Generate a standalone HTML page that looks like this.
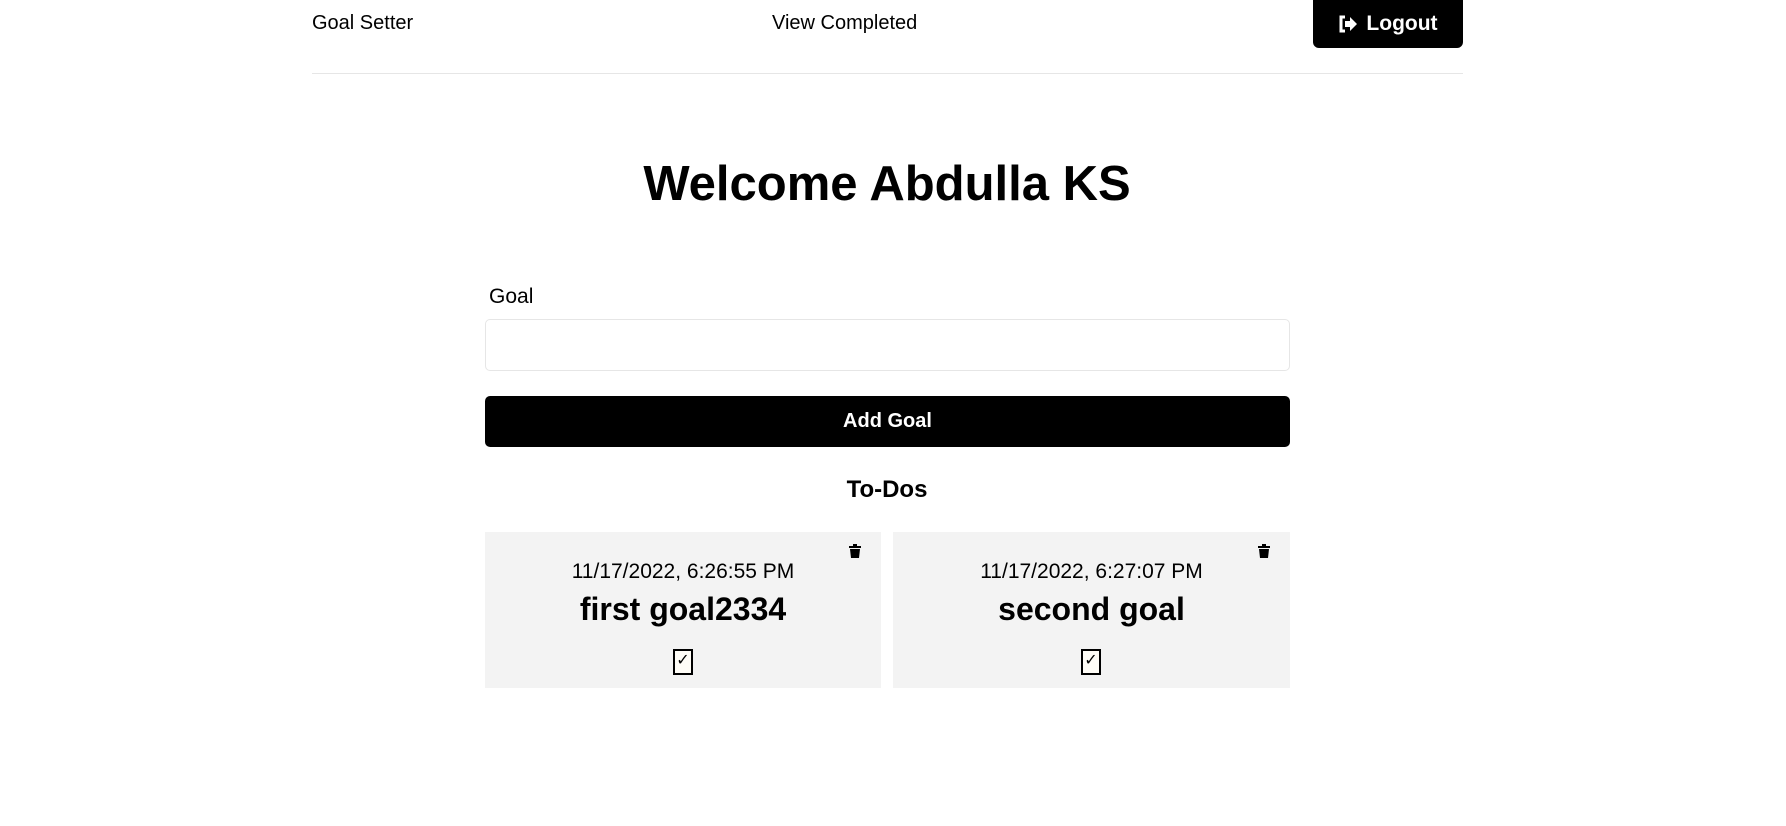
<!DOCTYPE html>
<html><head><meta charset="utf-8"><style>
*{margin:0;padding:0;box-sizing:border-box}
body{width:1786px;height:826px;background:#fff;font-family:"Liberation Sans",sans-serif;color:#000;position:relative;overflow:hidden}
.a{position:absolute}
.nav{font-size:20px;top:12px}
.logout{left:1313px;top:0;width:150px;height:48px;background:#000;border-radius:0 0 6px 6px;color:#fff;font-weight:bold;font-size:21px;display:flex;align-items:center;justify-content:center;gap:8px}
.hr{left:312px;top:73px;width:1151px;height:1px;background:#e6e6e6}
h1{position:absolute;left:0;width:1774px;top:156px;text-align:center;font-size:49px;font-weight:bold}
.label{left:489px;top:285px;font-size:21px}
.input{left:485px;top:319px;width:805px;height:52px;border:1px solid #e6e6e6;border-radius:5px}
.btn{left:485px;top:396px;width:805px;height:51px;background:#000;border-radius:5px;color:#fff;font-weight:bold;font-size:20px;display:flex;align-items:center;justify-content:center}
.todos{left:0;width:1774px;text-align:center;top:476px;font-size:24px;font-weight:bold}
.card{top:532px;width:396px;height:156px;background:#f3f3f3;text-align:center}
.date{position:absolute;top:28px;width:100%;font-size:21px}
.title{position:absolute;top:59px;width:100%;font-size:32px;font-weight:bold}
.cb{position:absolute;top:117px;left:188px;width:20px;height:26px;border:2px solid #000;background:#fffdf7;font-size:16px;line-height:20px}
.trash{position:absolute;top:12px;right:20px}
</style></head><body>
<div class="a nav" style="left:312px">Goal Setter</div>
<div class="a nav" style="left:772px">View Completed</div>
<div class="a logout"><svg width="20" height="18" viewBox="0 0 20 18"><path d="M7 2H3v14h4" fill="none" stroke="#fff" stroke-width="3"/><path d="M7 6h5V2l7 7-7 7v-4H7z" fill="#fff"/></svg>Logout</div>
<div class="a hr"></div>
<h1>Welcome Abdulla KS</h1>
<div class="a label">Goal</div>
<div class="a input"></div>
<div class="a btn">Add Goal</div>
<div class="a todos">To-Dos</div>
<div class="a card" style="left:485px">
<svg class="trash" width="12" height="14" viewBox="0 0 12 14"><path d="M0 2h12v2H0zM4 0h4v2H4zM1 5h10l-1 9H2z" fill="#000"/></svg>
<div class="date">11/17/2022, 6:26:55 PM</div><div class="title">first goal2334</div><div class="cb">✓</div></div>
<div class="a card" style="left:893px;width:397px">
<svg class="trash" width="12" height="14" viewBox="0 0 12 14"><path d="M0 2h12v2H0zM4 0h4v2H4zM1 5h10l-1 9H2z" fill="#000"/></svg>
<div class="date">11/17/2022, 6:27:07 PM</div><div class="title">second goal</div><div class="cb">✓</div></div>
</body></html>
